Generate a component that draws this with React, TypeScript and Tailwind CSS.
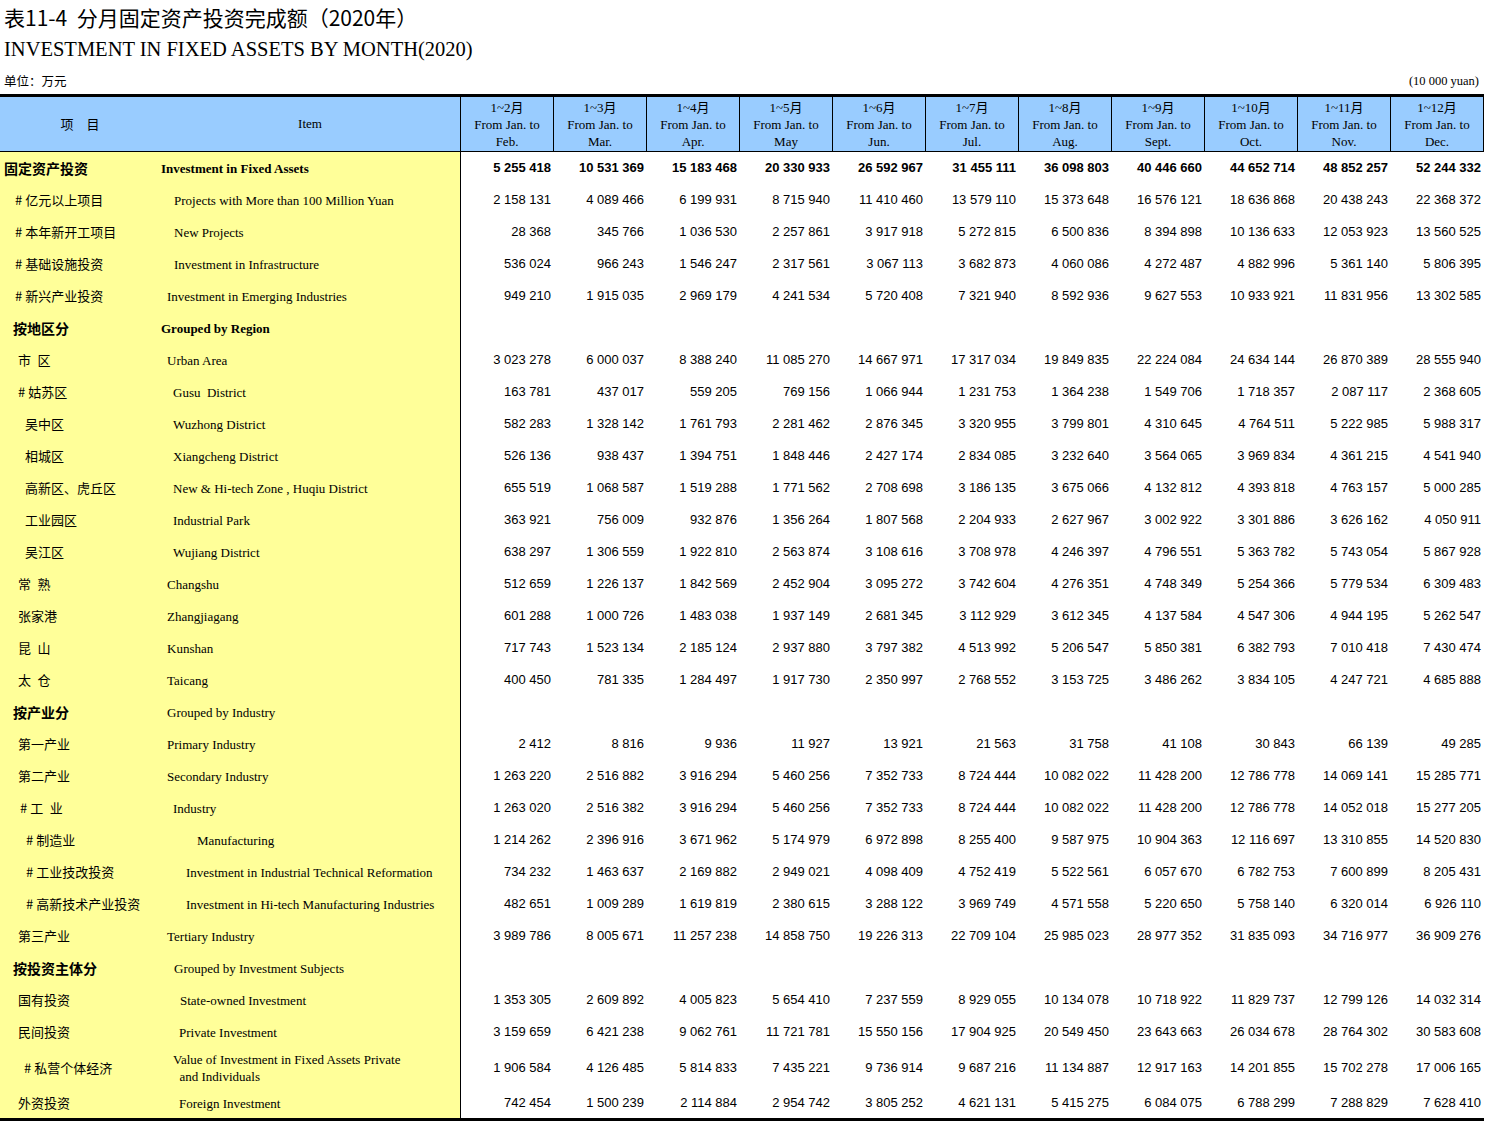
const serif = "font-['Liberation_Serif','Times_New_Roman','Noto_Sans_CJK_SC',serif]"
const sans = "font-['Liberation_Sans',Arial,sans-serif]"
const cjk = "font-['Noto_Sans_CJK_SC','Noto_Sans_CJK_JP',sans-serif]"

const months = [
  ["1~2月", "Feb."],
  ["1~3月", "Mar."],
  ["1~4月", "Apr."],
  ["1~5月", "May"],
  ["1~6月", "Jun."],
  ["1~7月", "Jul."],
  ["1~8月", "Aug."],
  ["1~9月", "Sept."],
  ["1~10月", "Oct."],
  ["1~11月", "Nov."],
  ["1~12月", "Dec."],
]

type Row = {
  cn: string
  cnX: number
  en: string[]
  enX: number
  bold?: boolean
  enBold?: boolean
  tall?: boolean
  last?: boolean
  v?: string
}

const rows: Row[] = [
  { cn: "固定资产投资", cnX: 4, en: ["Investment in Fixed Assets"], enX: 161, bold: true, enBold: true, v: "5 255 418|10 531 369|15 183 468|20 330 933|26 592 967|31 455 111|36 098 803|40 446 660|44 652 714|48 852 257|52 244 332" },
  { cn: "# 亿元以上项目", cnX: 15, en: ["Projects with More than 100 Million Yuan"], enX: 174, v: "2 158 131|4 089 466|6 199 931|8 715 940|11 410 460|13 579 110|15 373 648|16 576 121|18 636 868|20 438 243|22 368 372" },
  { cn: "# 本年新开工项目", cnX: 15, en: ["New Projects"], enX: 174, v: "28 368|345 766|1 036 530|2 257 861|3 917 918|5 272 815|6 500 836|8 394 898|10 136 633|12 053 923|13 560 525" },
  { cn: "# 基础设施投资", cnX: 15, en: ["Investment in Infrastructure"], enX: 174, v: "536 024|966 243|1 546 247|2 317 561|3 067 113|3 682 873|4 060 086|4 272 487|4 882 996|5 361 140|5 806 395" },
  { cn: "# 新兴产业投资", cnX: 15, en: ["Investment in Emerging Industries"], enX: 167, v: "949 210|1 915 035|2 969 179|4 241 534|5 720 408|7 321 940|8 592 936|9 627 553|10 933 921|11 831 956|13 302 585" },
  { cn: "按地区分", cnX: 13, en: ["Grouped by Region"], enX: 161, bold: true, enBold: true },
  { cn: "市\u2002区", cnX: 18, en: ["Urban Area"], enX: 167, v: "3 023 278|6 000 037|8 388 240|11 085 270|14 667 971|17 317 034|19 849 835|22 224 084|24 634 144|26 870 389|28 555 940" },
  { cn: "# 姑苏区", cnX: 18, en: ["Gusu  District"], enX: 173, v: "163 781|437 017|559 205|769 156|1 066 944|1 231 753|1 364 238|1 549 706|1 718 357|2 087 117|2 368 605" },
  { cn: "吴中区", cnX: 25, en: ["Wuzhong District"], enX: 173, v: "582 283|1 328 142|1 761 793|2 281 462|2 876 345|3 320 955|3 799 801|4 310 645|4 764 511|5 222 985|5 988 317" },
  { cn: "相城区", cnX: 25, en: ["Xiangcheng District"], enX: 173, v: "526 136|938 437|1 394 751|1 848 446|2 427 174|2 834 085|3 232 640|3 564 065|3 969 834|4 361 215|4 541 940" },
  { cn: "高新区、虎丘区", cnX: 25, en: ["New & Hi-tech Zone , Huqiu District"], enX: 173, v: "655 519|1 068 587|1 519 288|1 771 562|2 708 698|3 186 135|3 675 066|4 132 812|4 393 818|4 763 157|5 000 285" },
  { cn: "工业园区", cnX: 25, en: ["Industrial Park"], enX: 173, v: "363 921|756 009|932 876|1 356 264|1 807 568|2 204 933|2 627 967|3 002 922|3 301 886|3 626 162|4 050 911" },
  { cn: "吴江区", cnX: 25, en: ["Wujiang District"], enX: 173, v: "638 297|1 306 559|1 922 810|2 563 874|3 108 616|3 708 978|4 246 397|4 796 551|5 363 782|5 743 054|5 867 928" },
  { cn: "常\u2002熟", cnX: 18, en: ["Changshu"], enX: 167, v: "512 659|1 226 137|1 842 569|2 452 904|3 095 272|3 742 604|4 276 351|4 748 349|5 254 366|5 779 534|6 309 483" },
  { cn: "张家港", cnX: 18, en: ["Zhangjiagang"], enX: 167, v: "601 288|1 000 726|1 483 038|1 937 149|2 681 345|3 112 929|3 612 345|4 137 584|4 547 306|4 944 195|5 262 547" },
  { cn: "昆\u2002山", cnX: 18, en: ["Kunshan"], enX: 167, v: "717 743|1 523 134|2 185 124|2 937 880|3 797 382|4 513 992|5 206 547|5 850 381|6 382 793|7 010 418|7 430 474" },
  { cn: "太\u2002仓", cnX: 18, en: ["Taicang"], enX: 167, v: "400 450|781 335|1 284 497|1 917 730|2 350 997|2 768 552|3 153 725|3 486 262|3 834 105|4 247 721|4 685 888" },
  { cn: "按产业分", cnX: 13, en: ["Grouped by Industry"], enX: 167, bold: true },
  { cn: "第一产业", cnX: 18, en: ["Primary Industry"], enX: 167, v: "2 412|8 816|9 936|11 927|13 921|21 563|31 758|41 108|30 843|66 139|49 285" },
  { cn: "第二产业", cnX: 18, en: ["Secondary Industry"], enX: 167, v: "1 263 220|2 516 882|3 916 294|5 460 256|7 352 733|8 724 444|10 082 022|11 428 200|12 786 778|14 069 141|15 285 771" },
  { cn: "# 工\u2002业", cnX: 20, en: ["Industry"], enX: 173, v: "1 263 020|2 516 382|3 916 294|5 460 256|7 352 733|8 724 444|10 082 022|11 428 200|12 786 778|14 052 018|15 277 205" },
  { cn: "# 制造业", cnX: 26, en: ["Manufacturing"], enX: 197, v: "1 214 262|2 396 916|3 671 962|5 174 979|6 972 898|8 255 400|9 587 975|10 904 363|12 116 697|13 310 855|14 520 830" },
  { cn: "# 工业技改投资", cnX: 26, en: ["Investment in Industrial Technical Reformation"], enX: 186, v: "734 232|1 463 637|2 169 882|2 949 021|4 098 409|4 752 419|5 522 561|6 057 670|6 782 753|7 600 899|8 205 431" },
  { cn: "# 高新技术产业投资", cnX: 26, en: ["Investment in Hi-tech Manufacturing Industries"], enX: 186, v: "482 651|1 009 289|1 619 819|2 380 615|3 288 122|3 969 749|4 571 558|5 220 650|5 758 140|6 320 014|6 926 110" },
  { cn: "第三产业", cnX: 18, en: ["Tertiary Industry"], enX: 167, v: "3 989 786|8 005 671|11 257 238|14 858 750|19 226 313|22 709 104|25 985 023|28 977 352|31 835 093|34 716 977|36 909 276" },
  { cn: "按投资主体分", cnX: 13, en: ["Grouped by Investment Subjects"], enX: 174, bold: true },
  { cn: "国有投资", cnX: 18, en: ["State-owned Investment"], enX: 180, v: "1 353 305|2 609 892|4 005 823|5 654 410|7 237 559|8 929 055|10 134 078|10 718 922|11 829 737|12 799 126|14 032 314" },
  { cn: "民间投资", cnX: 18, en: ["Private Investment"], enX: 179, v: "3 159 659|6 421 238|9 062 761|11 721 781|15 550 156|17 904 925|20 549 450|23 643 663|26 034 678|28 764 302|30 583 608" },
  { cn: "# 私营个体经济", cnX: 24, en: ["Value of Investment in Fixed Assets Private", "\u00a0 and Individuals"], enX: 173, tall: true, v: "1 906 584|4 126 485|5 814 833|7 435 221|9 736 914|9 687 216|11 134 887|12 917 163|14 201 855|15 702 278|17 006 165" },
  { cn: "外资投资", cnX: 18, en: ["Foreign Investment"], enX: 179, last: true, v: "742 454|1 500 239|2 114 884|2 954 742|3 805 252|4 621 131|5 415 275|6 084 075|6 788 299|7 288 829|7 628 410" },
]

function DataRow({ row }: { row: Row }) {
  const values = row.v ? row.v.split("|") : Array(11).fill("")
  const h = row.tall ? "h-[40px]" : row.last ? "h-[33px] border-b-[3px] border-black" : "h-[32px]"
  return (
    <div className={`flex ${h}`}>
      <div className="flex w-[461px] shrink-0 items-center bg-[#ffff99] border-r border-black">
        <div
          className={`w-[160px] shrink-0 whitespace-pre text-[13px] ${cjk} ${row.bold ? "font-bold text-[14px]" : ""}`}
          style={{ paddingLeft: row.cnX }}
        >
          {row.cn}
        </div>
        <div
          className={`whitespace-pre text-[13px] leading-[17px] ${serif} ${row.enBold ? "font-bold" : ""}`}
          style={{ paddingLeft: row.enX - 160 }}
        >
          {row.en.map((l) => (
            <div key={l}>{l}</div>
          ))}
        </div>
      </div>
      {values.map((n, i) => (
        <div
          key={i}
          className={`flex w-[93px] shrink-0 items-center justify-end pr-[3px] text-[13px] ${sans} ${row.bold ? "font-bold" : ""}`}
        >
          {n}
        </div>
      ))}
    </div>
  )
}

export default function App() {
  return (
    <main className="w-[1485px] bg-white text-black">
      <div className={`h-[34px] whitespace-pre pl-[4px] text-[21px] leading-[34px] ${cjk}`}>表11-4  分月固定资产投资完成额（2020年）</div>
      <div className={`h-[30px] pl-[4px] text-[20.5px] leading-[30px] ${serif}`}>INVESTMENT IN FIXED ASSETS BY MONTH(2020)</div>
      <div className="flex h-[30px] items-start justify-between pt-[9px] pl-[4px] pr-[6px] leading-[16px]">
        <span className={`text-[12.5px] ${cjk}`}>单位：万元</span>
        <span className={`text-[12.5px] ${serif}`}>(10 000 yuan)</span>
      </div>

      <div className="w-[1484px] border-t-[3px] border-black">
        {/* 表头 */}
        <div className="flex h-[55px] border-b border-black bg-[#99ccff]">
          <div className={`flex w-[160px] shrink-0 items-center justify-center text-[13px] ${cjk}`}>项　目</div>
          <div className={`flex w-[301px] shrink-0 items-center justify-center border-r border-black text-[13px] ${serif}`}>
            Item
          </div>
          {months.map(([m, e]) => (
            <div
              key={m}
              className={`flex w-[93px] shrink-0 flex-col items-center justify-center border-r border-black text-[13px] leading-[17px] ${serif}`}
            >
              <div>{m}</div>
              <div>From Jan. to</div>
              <div>{e}</div>
            </div>
          ))}
        </div>

        {rows.map((r) => (
          <DataRow key={r.cn} row={r} />
        ))}
      </div>
    </main>
  )
}
